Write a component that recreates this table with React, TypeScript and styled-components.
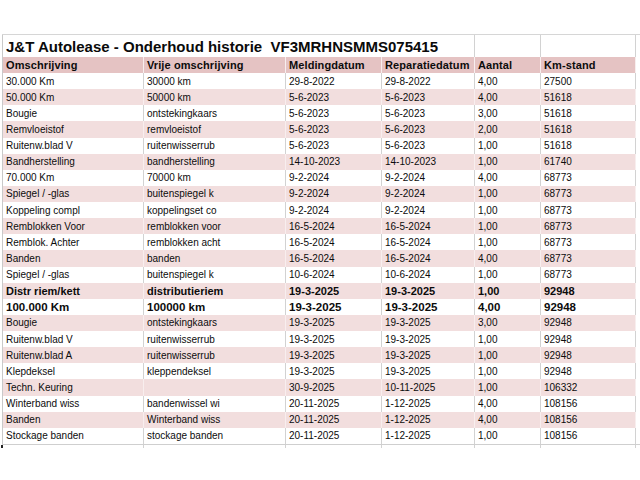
import React from 'react';
import styled, { createGlobalStyle } from 'styled-components';

const GlobalStyle = createGlobalStyle`
  html, body {
    margin: 0;
    padding: 0;
    background: #ffffff;
  }
  body {
    font-family: "Liberation Sans", Arial, sans-serif;
    color: #0c0c0c;
  }
`;

const COLUMNS = '141px 142px 96px 93px 66px 95px 1fr';

type Shade = 'white' | 'pink' | 'head';
type Weight = 'normal' | 'bold' | 'big';

const shadeColor: Record<Shade, string> = {
  white: '#ffffff',
  pink: '#f2dede',
  head: '#e5c3c3',
};

const Sheet = styled.div`
  margin: 34px 0 0 2px;
  border-top: 1px solid #d6d6d6;
`;

const Row = styled.div<{ $height: string }>`
  display: grid;
  grid-template-columns: ${COLUMNS};
  height: ${(p) => p.$height};
  border-left: 1px solid #c9c9c9;
`;

const Cell = styled.div<{ $shade: Shade; $weight: Weight }>`
  box-sizing: border-box;
  display: flex;
  align-items: center;
  padding-left: 3px;
  overflow: hidden;
  white-space: nowrap;
  background: ${(p) => shadeColor[p.$shade]};
  border-right: 1px solid ${(p) => (p.$shade === 'white' ? '#d2d2d2' : '#f8eeee')};
  font-size: ${(p) => (p.$weight === 'big' ? '11.5px' : p.$weight === 'bold' ? '11px' : '10px')};
  font-weight: ${(p) => (p.$weight === 'normal' ? 400 : 700)};
`;

const Filler = styled.div`
  background: #ffffff;
`;

const TitleCell = styled.div`
  grid-column: span 4;
  box-sizing: border-box;
  display: flex;
  align-items: center;
  padding: 1px 0 0 3px;
  white-space: pre;
  font-size: 15px;
  font-weight: 700;
  color: #0a0a0a;
  border-right: 1px solid #d2d2d2;
`;

const BlankCell = styled.div`
  box-sizing: border-box;
  border-right: 1px solid #d2d2d2;
`;

const HeaderCell = styled(Cell)`
  font-size: 11px;
  font-weight: 700;
  letter-spacing: 0.1px;
`;

const BottomLine = styled.div`
  border-top: 1px solid #cfcfcf;
`;

const Stub = styled.div`
  display: grid;
  grid-template-columns: ${COLUMNS};
  height: 3px;
  border-left: 2px solid #222;
  margin-left: -1px;
`;

const StubCell = styled.div`
  border-right: 1px solid #d2d2d2;
`;

const headers = ['Omschrijving', 'Vrije omschrijving', 'Meldingdatum', 'Reparatiedatum', 'Aantal', 'Km-stand'];

type Entry = [string, string, string, string, string, string, Weight?];

const entries: Entry[] = [
  ['30.000 Km', '30000 km', '29-8-2022', '29-8-2022', '4,00', '27500'],
  ['50.000 Km', '50000 km', '5-6-2023', '5-6-2023', '4,00', '51618'],
  ['Bougie', 'ontstekingkaars', '5-6-2023', '5-6-2023', '3,00', '51618'],
  ['Remvloeistof', 'remvloeistof', '5-6-2023', '5-6-2023', '2,00', '51618'],
  ['Ruitenw.blad V', 'ruitenwisserrub', '5-6-2023', '5-6-2023', '1,00', '51618'],
  ['Bandherstelling', 'bandherstelling', '14-10-2023', '14-10-2023', '1,00', '61740'],
  ['70.000 Km', '70000 km', '9-2-2024', '9-2-2024', '4,00', '68773'],
  ['Spiegel / -glas', 'buitenspiegel k', '9-2-2024', '9-2-2024', '1,00', '68773'],
  ['Koppeling compl', 'koppelingset co', '9-2-2024', '9-2-2024', '1,00', '68773'],
  ['Remblokken Voor', 'remblokken voor', '16-5-2024', '16-5-2024', '1,00', '68773'],
  ['Remblok. Achter', 'remblokken acht', '16-5-2024', '16-5-2024', '1,00', '68773'],
  ['Banden', 'banden', '16-5-2024', '16-5-2024', '4,00', '68773'],
  ['Spiegel / -glas', 'buitenspiegel k', '10-6-2024', '10-6-2024', '1,00', '68773'],
  ['Distr riem/kett', 'distributieriem', '19-3-2025', '19-3-2025', '1,00', '92948', 'bold'],
  ['100.000 Km', '100000 km', '19-3-2025', '19-3-2025', '4,00', '92948', 'big'],
  ['Bougie', 'ontstekingkaars', '19-3-2025', '19-3-2025', '3,00', '92948'],
  ['Ruitenw.blad V', 'ruitenwisserrub', '19-3-2025', '19-3-2025', '1,00', '92948'],
  ['Ruitenw.blad A', 'ruitenwisserrub', '19-3-2025', '19-3-2025', '1,00', '92948'],
  ['Klepdeksel', 'kleppendeksel', '19-3-2025', '19-3-2025', '1,00', '92948'],
  ['Techn. Keuring', '', '30-9-2025', '10-11-2025', '1,00', '106332'],
  ['Winterband wiss', 'bandenwissel wi', '20-11-2025', '1-12-2025', '4,00', '108156'],
  ['Banden', 'Winterband wiss', '20-11-2025', '1-12-2025', '4,00', '108156'],
  ['Stockage banden', 'stockage banden', '20-11-2025', '1-12-2025', '1,00', '108156'],
];

export default function App() {
  return (
    <>
      <GlobalStyle />
      <Sheet>
        <Row $height="22px">
          <TitleCell>{'J&T Autolease - Onderhoud historie  VF3MRHNSMMS075415'}</TitleCell>
          <BlankCell />
          <BlankCell />
          <Filler />
        </Row>
        <Row $height="16px">
          {headers.map((h) => (
            <HeaderCell key={h} $shade="head" $weight="bold">
              {h}
            </HeaderCell>
          ))}
          <Filler />
        </Row>
        {entries.map((entry, i) => {
          const shade: Shade = i % 2 === 1 ? 'pink' : 'white';
          const weight: Weight = entry[6] ?? 'normal';
          return (
            <Row key={i} $height="16.13px">
              {entry.slice(0, 6).map((value, j) => (
                <Cell key={j} $shade={shade} $weight={weight}>
                  {value}
                </Cell>
              ))}
              <Filler />
            </Row>
          );
        })}
        <BottomLine />
        <Stub>
          {headers.map((h) => (
            <StubCell key={h} />
          ))}
        </Stub>
      </Sheet>
    </>
  );
}
